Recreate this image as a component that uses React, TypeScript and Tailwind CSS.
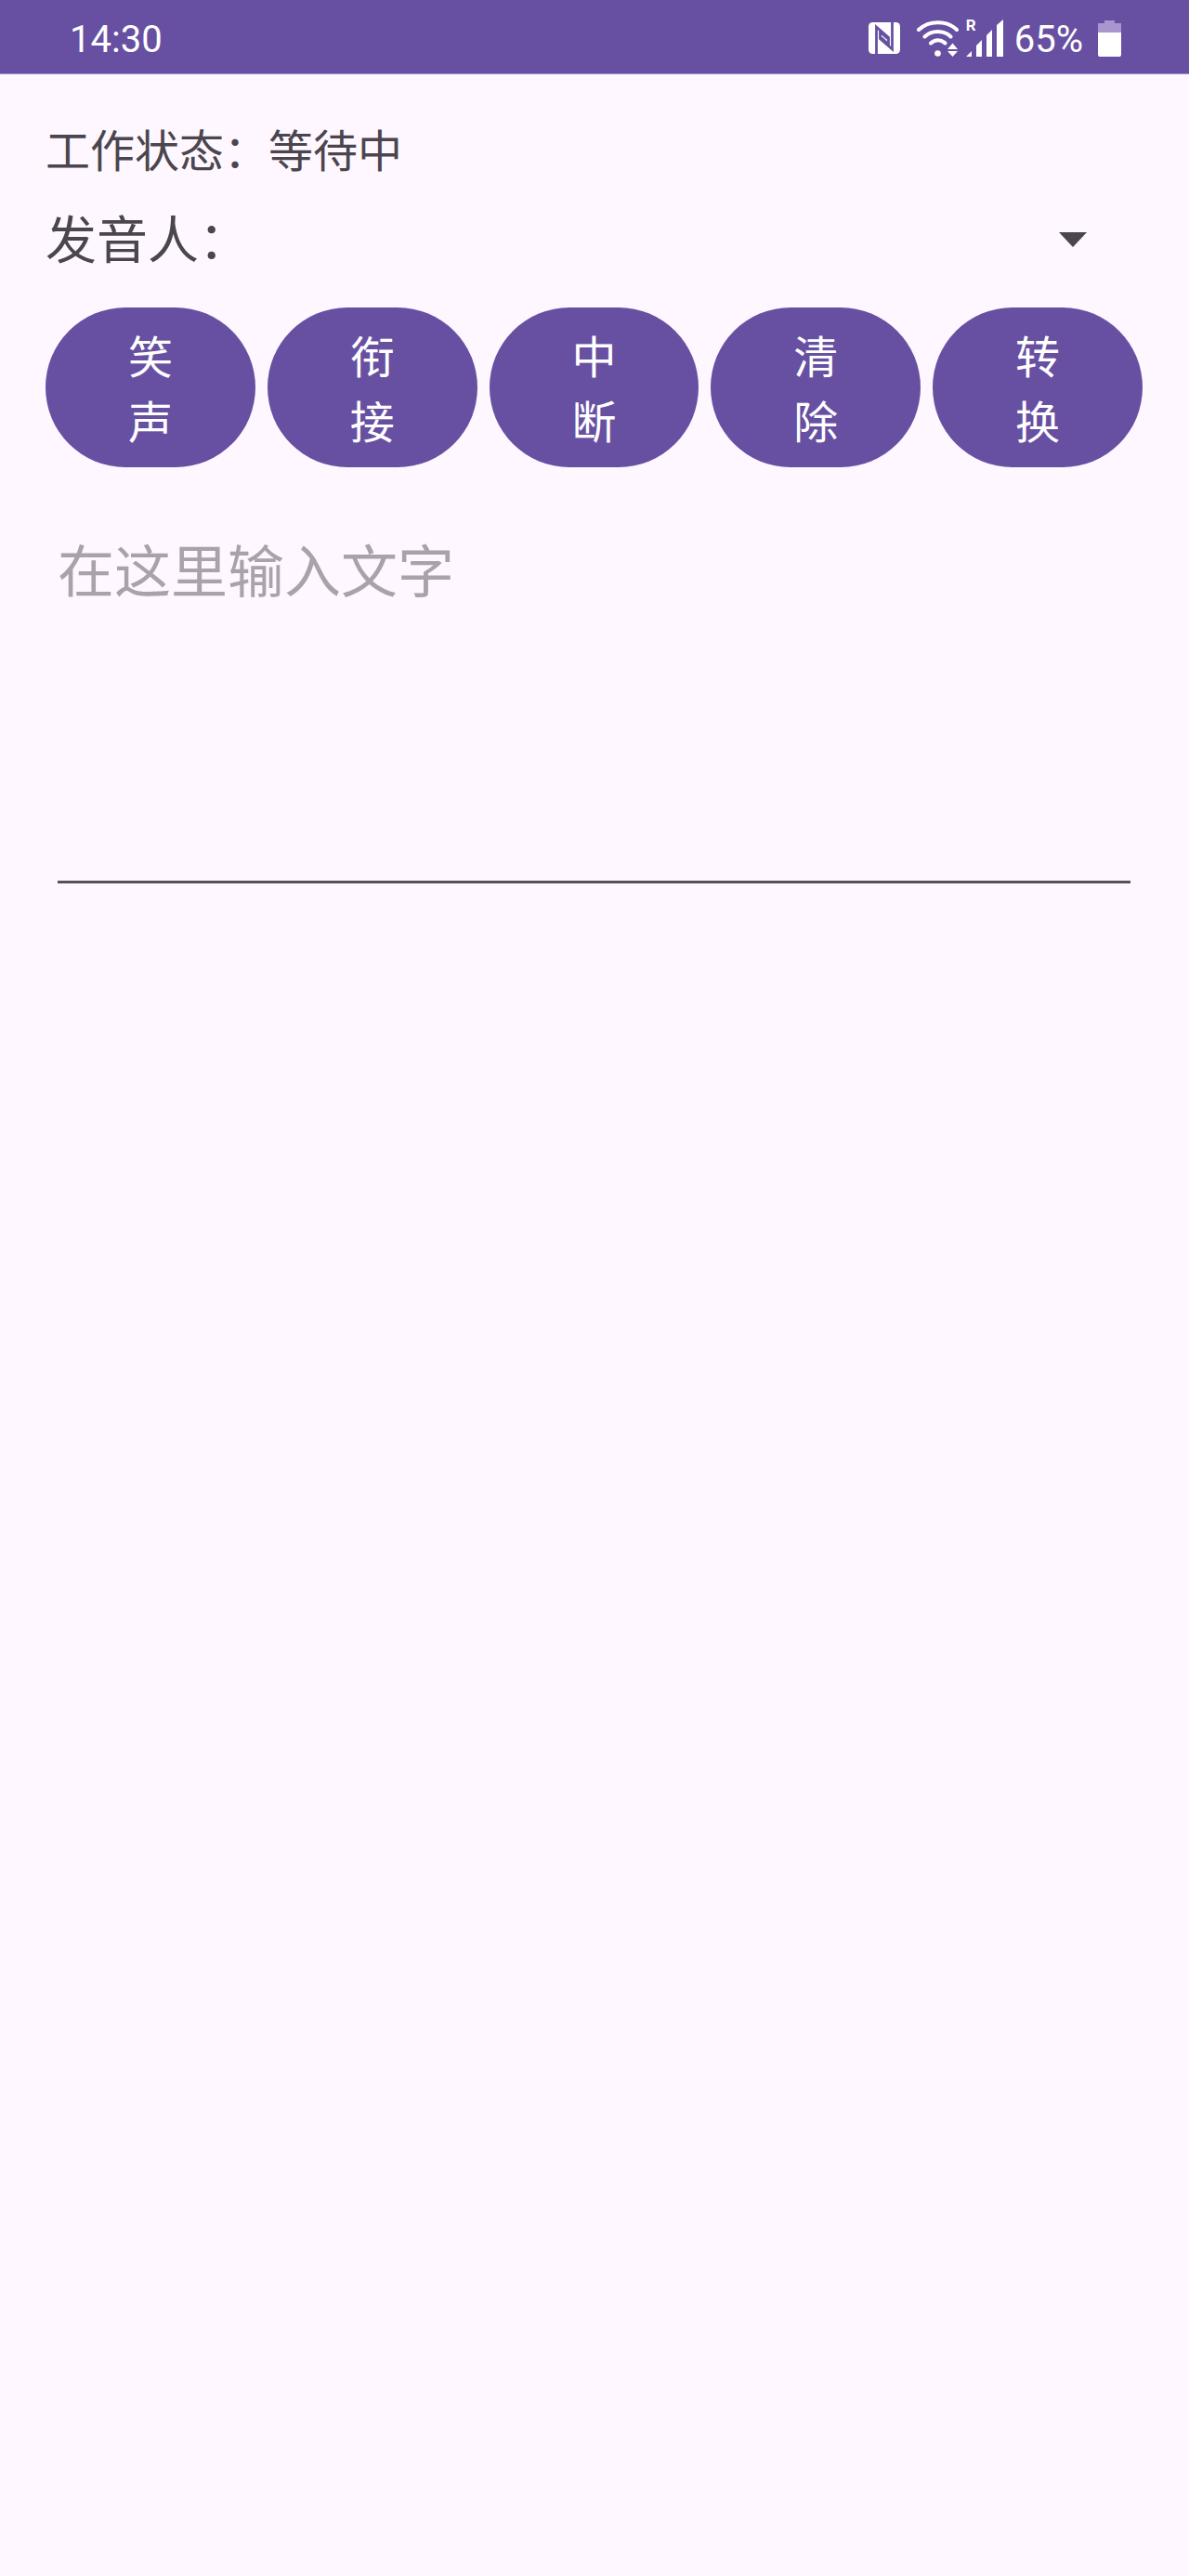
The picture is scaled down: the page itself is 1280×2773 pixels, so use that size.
import React, { useState } from 'react';

const ACTIONS = ['笑声', '衔接', '中断', '清除', '转换'];

function NfcIcon() {
  return (
    <svg className="h-9 w-9" viewBox="0 0 36 36" aria-hidden="true">
      <rect x="1" y="1" width="34" height="34" rx="4.500" fill="#fff" />
      <path
        fill="none"
        stroke="#6750a2"
        strokeWidth="2.800"
        d="M9.500 36V6L22.500 17.500V24.500L14.500 17.500M26.500 0V30L13.500 18.500V11.500L21.500 18.500"
      />
    </svg>
  );
}

function WifiIcon() {
  return (
    <svg className="h-10 w-12" viewBox="0 0 48 40" aria-hidden="true">
      <g fill="none" stroke="#fff" strokeWidth="4" strokeLinecap="round">
        <path d="M3 11C14 0.500 33 0.500 44 11" />
        <path d="M9.500 18.500C17 11 30 11 37.500 18.500" />
        <path d="M16 25.500C20.500 21 27 21 31.500 25.500" />
      </g>
      <circle cx="23.500" cy="36.500" r="3.300" fill="#fff" />
      <path fill="#fff" d="M34 32L39.500 25.500L45 32zM34 34h11l-5.500 6z" />
    </svg>
  );
}

function SignalIcon() {
  return (
    <svg className="h-10 w-10" viewBox="0 0 40 40" aria-hidden="true">
      <path fill="#fff" d="M0 40l6-6v6zM11 40V28l6-6v18zM22 40V17l6-6v29zM33 40V6l7-6v40z" />
    </svg>
  );
}

function BatteryIcon() {
  return (
    <svg className="h-10 w-[25px]" viewBox="0 0 25 40" aria-hidden="true">
      <path fill="#a996cf" d="M7 1h11v3h7v10H0V4h7z" />
      <path fill="#fff" d="M0 14h25v24a2 2 0 0 1-2 2H2a2 2 0 0 1-2-2z" />
    </svg>
  );
}

function StatusBar() {
  return (
    <header className="flex h-20 items-center justify-between border-b border-[#a08bd0] bg-[#6750a2] pt-0.5 pr-[73px] pl-[75px] font-['Roboto',sans-serif] text-[40px] leading-10 text-white">
      <span className="pt-1">14:30</span>
      <div className="flex items-center">
        <NfcIcon />
        <span className="ml-4">
          <WifiIcon />
        </span>
        <span className="relative ml-1.5">
          <SignalIcon />
          <span className="absolute top-0 left-0 text-[17px] leading-3 font-bold">R</span>
        </span>
        <span className="mr-4 ml-3 pt-1">65%</span>
        <BatteryIcon />
      </div>
    </header>
  );
}

function App() {
  const [text, setText] = useState('');

  return (
    <div
      lang="zh-CN"
      className="min-h-screen bg-[#fef7ff] font-['Noto_Sans_CJK_SC',sans-serif] text-[#4b454d]"
    >
      <StatusBar />
      <main className="pt-11 pr-[50px] pl-[49px]">
        <p className="text-[48px] leading-[70px]">工作状态：等待中</p>

        <div className="mt-5 flex h-20 items-center">
          <label htmlFor="speaker" className="text-[55px] leading-20">
            发音人：
          </label>
          <div className="relative h-20 flex-1">
            <select id="speaker" className="h-full w-full appearance-none bg-transparent pr-24 text-[48px] outline-none" />
            <svg
              className="pointer-events-none absolute top-9 right-[60px] h-4 w-[30px]"
              viewBox="0 0 30 16"
              aria-hidden="true"
            >
              <path fill="#4b454d" d="M0 0h30L15 16z" />
            </svg>
          </div>
        </div>

        <div className="mt-[37px] grid grid-cols-5 gap-[13px]">
          {ACTIONS.map((action) => (
            <button
              key={action}
              type="button"
              onClick={() => action === '清除' && setText('')}
              className="rounded-full bg-[#6750a2] px-[88px] pt-[15px] pb-[17px] text-[48px] leading-[70px] break-all text-white"
            >
              {action}
            </button>
          ))}
        </div>

        <div className="px-[13px] pt-16">
          <textarea
            aria-label="在这里输入文字"
            placeholder="在这里输入文字"
            value={text}
            onChange={(e) => setText(e.target.value)}
            className="block h-[384px] w-full resize-none border-b-3 border-[#57515a] bg-transparent text-[61px] leading-[90px] outline-none placeholder:text-[#a9a2aa]"
          />
        </div>
      </main>
    </div>
  );
}

export default App;
